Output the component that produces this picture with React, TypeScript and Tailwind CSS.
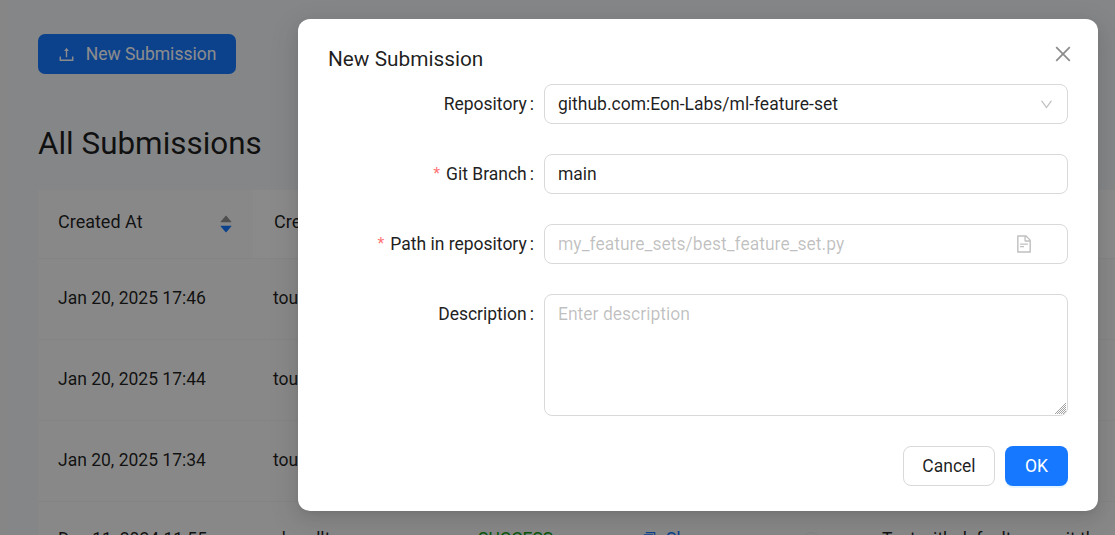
import { AiFillCaretDown, AiFillCaretUp, AiOutlineClose, AiOutlineCopy, AiOutlineDown, AiOutlineFileText, AiOutlineUpload } from 'react-icons/ai';

const rows = [
  { createdAt: 'Jan 20, 2025 17:46', creator: 'touqir' },
  { createdAt: 'Jan 20, 2025 17:44', creator: 'touqir' },
  { createdAt: 'Jan 20, 2025 17:34', creator: 'touqir' },
];

function Label({ text, required }: { text: string; required?: boolean }) {
  return (
    <label className="flex h-10 w-[216px] shrink-0 items-center justify-end pr-[10px] text-[#1f1f1f]">
      {required && <span className="mr-[6px] font-['Liberation_Sans',sans-serif] text-[#ff7072]">*</span>}
      <span>{text}</span>
      <span className="ml-[3px]">:</span>
    </label>
  );
}

function SubmissionTable() {
  return (
    <div className="mt-[22px] w-full text-[#000000e0]">
      <div className="flex h-[68px] items-center bg-[#f8f8f8]">
        <div className="flex h-full w-[215px] shrink-0 items-center justify-between pb-[4px] pl-5 pr-[19px] text-[18px]">
          <span className="pb-[2px]">Created At</span>
          <span className="flex flex-col pt-[3px] text-[16px] leading-[9px] text-[#909090]">
            <AiFillCaretUp />
            <AiFillCaretDown className="-mt-[6px] text-[#1677ff]" />
          </span>
        </div>
        <div className="flex h-full flex-1 items-center border-l border-[#fbfbfb] bg-[#fbfbfb] pb-[6px] pl-5 text-[18px]">Created By</div>
      </div>
      {rows.map((r) => (
        <div key={r.createdAt} className="flex h-[81px] items-center border-t border-[#f0f0f0] bg-[#f8f8f8] pb-[2px] first:h-[80px] first:border-t-0">
          <div className="w-[215px] shrink-0 pl-5">{r.createdAt}</div>
          <div className="pl-5">{r.creator}</div>
        </div>
      ))}
      <div className="flex h-[81px] items-center border-t border-[#f0f0f0] bg-[#f8f8f8] pb-[5px]">
        <div className="w-[215px] shrink-0 pl-5">Dec 11, 2024 11:55</div>
        <div className="w-[205px] shrink-0 pl-5">zhandlt</div>
        <div className="w-[163px] shrink-0 pl-5 text-[#0f9d0f]">SUCCESS</div>
        <div className="flex w-[241px] shrink-0 items-center pl-5 pr-[42px]">
          <AiOutlineCopy className="text-[17px] text-[#1677ff]" />
          <span className="ml-[8px] text-[#1677ff]">Show</span>
          <span className="ml-auto mt-[3px] h-[18px] w-[18px] rounded-full border border-[#ececec]" />
        </div>
        <div className="whitespace-nowrap pl-5">Test with default commit th</div>
      </div>
    </div>
  );
}

export default function App() {
  return (
    <div className="relative h-[535px] w-[1115px] overflow-hidden bg-[#f5f5f5] font-['Roboto',sans-serif] text-[17.5px]">
      <div className="ml-2 h-full bg-[#f1f4f7] pl-[30px] pt-[34px]">
        <button className="flex h-10 w-[198px] items-center justify-center gap-[10px] rounded-[7px] bg-[#1677ff] pr-[1px] text-white">
          <AiOutlineUpload className="text-[19px]" />
          New Submission
        </button>
        <h1 className="mt-[46px] text-[31.4px] leading-[48px] font-normal text-[#000000e0]">All Submissions</h1>
        <SubmissionTable />
      </div>

      {/* modal mask */}
      <div className="absolute inset-0 bg-black/45" />

      <div className="absolute left-[298px] top-[19px] h-[492px] w-[800px] rounded-[12px] bg-white pl-[30px] pr-[30px] pt-[65px] shadow-[0_6px_16px_0_rgba(0,0,0,0.08),0_3px_6px_-4px_rgba(0,0,0,0.12),0_9px_28px_8px_rgba(0,0,0,0.05)]">
        <div className="absolute left-[30px] top-[24px] text-[20.8px] leading-[32px] font-normal text-[#000000e0]">
          New Submission
        </div>
        <AiOutlineClose className="absolute right-[24px] top-[24px] text-[22px] text-[#00000073]" />

        <div className="flex flex-col gap-[30px]">
          <div className="flex">
            <Label text="Repository" />
            <div className="flex h-10 w-[524px] items-center justify-between rounded-[8px] border border-[#d9d9d9] pl-[13px] pr-[13px] text-[#000000e0]">
              <span>github.com:Eon-Labs/ml-feature-set</span>
              <AiOutlineDown className="text-[15px] text-[#00000040]" />
            </div>
          </div>
          <div className="flex">
            <Label text="Git Branch" required />
            <input
              className="h-10 w-[524px] rounded-[8px] border border-[#d9d9d9] px-[13px] text-[#000000e0] outline-none"
              defaultValue="main"
            />
          </div>
          <div className="flex">
            <Label text="Path in repository" required />
            <div className="flex h-10 w-[524px] items-center rounded-[8px] border border-[#d9d9d9] pl-[13px] pr-[33px]">
              <input
                className="min-w-0 flex-1 outline-none placeholder:text-[#00000040]"
                placeholder="my_feature_sets/best_feature_set.py"
              />
              <AiOutlineFileText className="text-[20px] text-[#00000040]" />
            </div>
          </div>
          <div className="flex">
            <Label text="Description" />
            <div className="relative h-[122px] w-[524px]">
              <textarea
                className="block h-full w-full resize-none rounded-[8px] border border-[#d9d9d9] px-[13px] py-[8px] leading-[22px] outline-none placeholder:text-[#00000040]"
                placeholder="Enter description"
              />
              {/* resize grip */}
              <svg className="absolute bottom-[2px] right-[2px]" width="11" height="11" viewBox="0 0 11 11" stroke="#8c8c8c" strokeWidth="0.8">
                <path d="M11 0 0 11M11 2 2 11M11 4 4 11M11 6 6 11M11 8 8 11" />
              </svg>
            </div>
          </div>
        </div>

        <div className="mt-[30px] flex justify-end gap-[10px]">
          <button className="h-10 w-[92px] rounded-[8px] border border-[#d9d9d9] bg-white text-[#000000e0]">Cancel</button>
          <button className="h-10 w-[63px] rounded-[8px] bg-[#1677ff] text-white shadow-[0_2px_0_rgba(5,145,255,0.1)]">OK</button>
        </div>
      </div>
    </div>
  );
}
